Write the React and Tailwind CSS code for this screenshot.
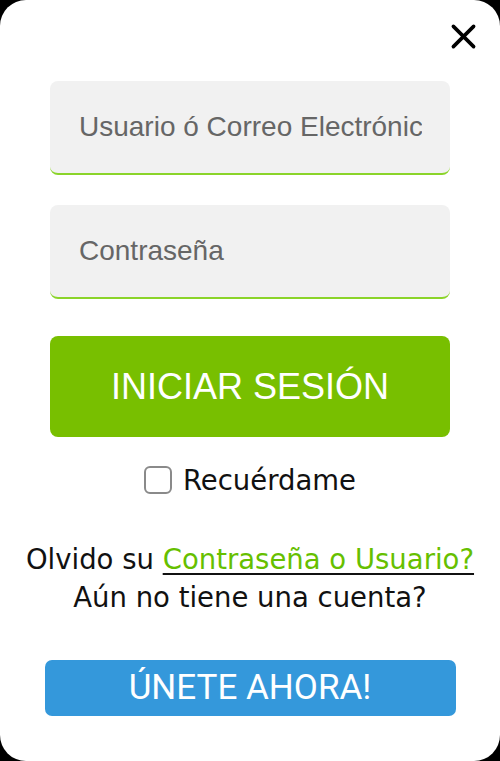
import React, { useState } from 'react';

export default function App() {
    const [remember, setRemember] = useState(false);

    return (
        <div className="min-h-screen bg-black">
            <div className="relative h-[761px] w-full overflow-hidden rounded-[26px] bg-white px-[50px] pt-[81px]">
                {/* close */}
                <button className="absolute top-[23px] right-[23px] flex h-[27px] w-[27px] items-center justify-center">
                    <svg viewBox="0 0 24 24" className="h-[27px] w-[27px]" fill="none" stroke="#000" strokeWidth="3.2" strokeLinecap="round">
                        <path d="M3 3 L21 21 M21 3 L3 21" />
                    </svg>
                </button>

                <div className="flex flex-col" style={{ fontFamily: "'Liberation Sans', Arial, sans-serif" }}>
                    <input
                        type="text"
                        placeholder="Usuario ó Correo Electrónico"
                        className="h-[94px] w-full rounded-[8px] border-b-2 border-[#8bd42a] bg-[#f1f1f1] pr-[28px] pl-[29px] text-[28px] text-[#555] outline-none placeholder:text-[#666]"
                    />
                    <input
                        type="password"
                        placeholder="Contraseña"
                        className="mt-[30px] h-[94px] w-full rounded-[8px] border-b-2 border-[#8bd42a] bg-[#f1f1f1] pr-[28px] pl-[29px] text-[28px] text-[#555] outline-none placeholder:text-[#666]"
                    />
                    <button className="mt-[37px] flex h-[101px] w-full items-center justify-center rounded-[8px] bg-[#78bf00] text-[36px] text-white">
                        INICIAR SESIÓN
                    </button>
                </div>

                <div className="flex flex-col items-center" style={{ fontFamily: "'DejaVu Sans', Verdana, sans-serif" }}>
                    <label className="mt-[27px] flex items-center gap-[11px] text-[27.5px] leading-[32px] text-[#111]">
                        <span
                            onClick={() => setRemember(!remember)}
                            className="flex h-[28px] w-[28px] items-center justify-center rounded-[6px] border-2 border-[#8a8a8a] bg-white"
                        >
                            {remember && <span className="h-[14px] w-[14px] rounded-[2px] bg-[#78bf00]" />}
                        </span>
                        Recuérdame
                    </label>

                    <div className="mt-[44px] -mx-[30px] text-center text-[27.5px] leading-[38px] text-[#111]">
                        <p>
                            Olvido su{' '}
                            <a href="#" className="text-[#66bf00] underline decoration-[#111] decoration-2 underline-offset-[4px]">
                                Contraseña o Usuario?
                            </a>
                        </p>
                        <p>Aún no tiene una cuenta?</p>
                    </div>

                    <button
                        className="mt-[44px] flex h-[56px] w-[411px] items-center justify-center rounded-[7px] bg-[#3498db] text-[35px] text-white"
                        style={{ fontFamily: "Roboto, 'Noto Sans', sans-serif" }}
                    >
                        ÚNETE AHORA!
                    </button>
                </div>
            </div>
        </div>
    );
}
